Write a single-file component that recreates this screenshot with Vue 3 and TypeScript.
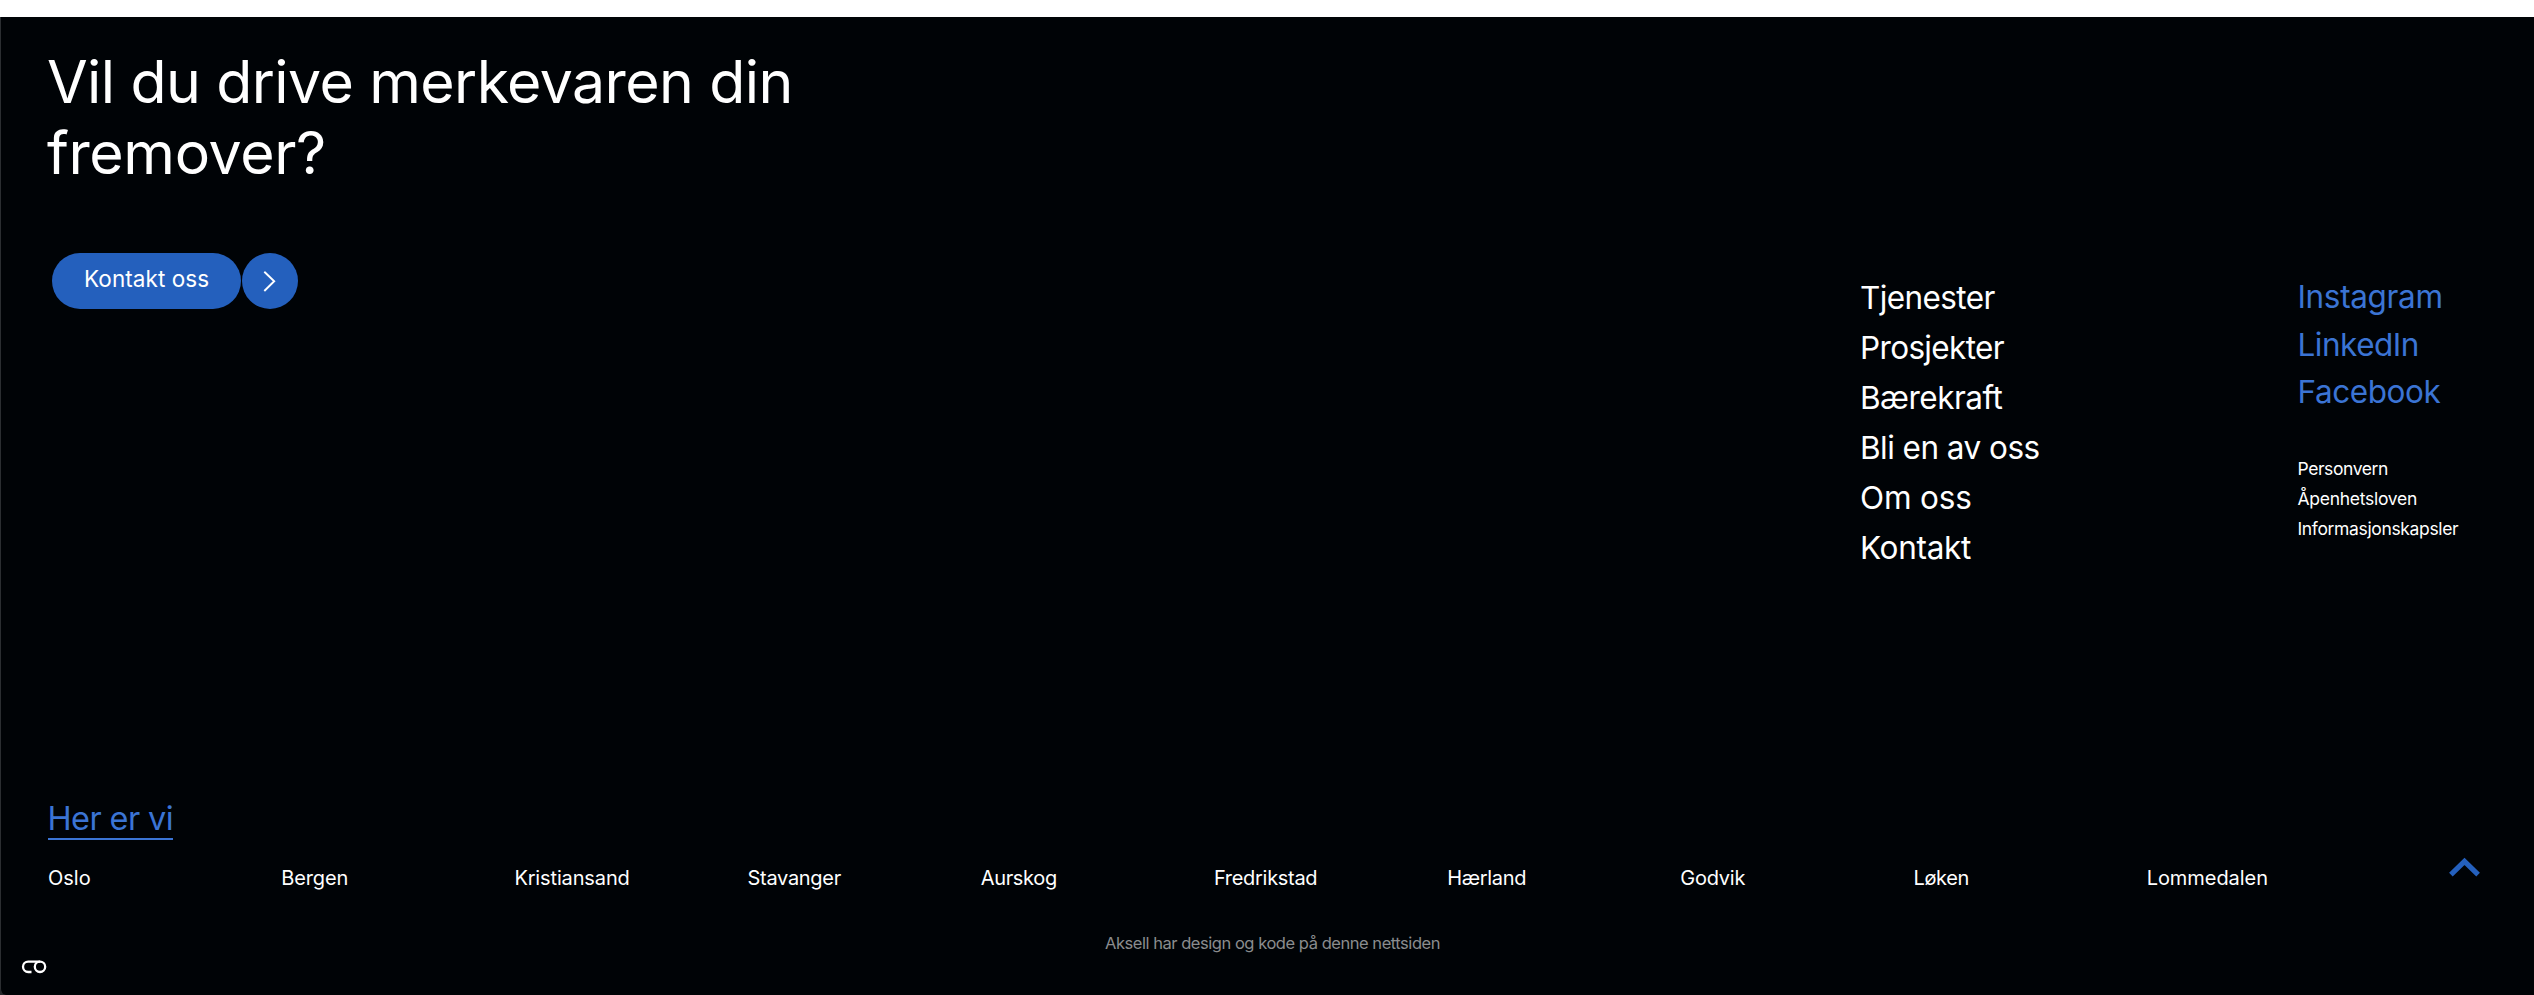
<script setup lang="ts">
interface Item {
  label: string
  tracking: number
}

const nav: Item[] = [
  { label: 'Tjenester', tracking: -0.6 },
  { label: 'Prosjekter', tracking: -0.65 },
  { label: 'Bærekraft', tracking: -0.52 },
  { label: 'Bli en av oss', tracking: -0.53 },
  { label: 'Om oss', tracking: -0.15 },
  { label: 'Kontakt', tracking: -0.31 },
]

const social: Item[] = [
  { label: 'Instagram', tracking: -0.35 },
  { label: 'LinkedIn', tracking: -0.5 },
  { label: 'Facebook', tracking: -0.42 },
]

const legal: Item[] = [
  { label: 'Personvern', tracking: -0.42 },
  { label: 'Åpenhetsloven', tracking: -0.27 },
  { label: 'Informasjonskapsler', tracking: -0.35 },
]

const cities: Item[] = [
  { label: 'Oslo', tracking: 0 },
  { label: 'Bergen', tracking: -0.1 },
  { label: 'Kristiansand', tracking: -0.14 },
  { label: 'Stavanger', tracking: -0.3 },
  { label: 'Aurskog', tracking: -0.35 },
  { label: 'Fredrikstad', tracking: -0.3 },
  { label: 'Hærland', tracking: -0.3 },
  { label: 'Godvik', tracking: -0.25 },
  { label: 'Løken', tracking: -0.35 },
  { label: 'Lommedalen', tracking: -0.06 },
]

const tracked = (item: Item) => ({ letterSpacing: `${item.tracking}px` })
</script>

<template>
  <div class="strip"></div>
  <footer class="footer">
    <div class="top">
      <section class="lead">
        <h2 class="title">
          <span class="line first">Vil du drive merkevaren din</span>
          <span class="line second">fremover?</span>
        </h2>
        <a class="cta">
          <span class="pill">Kontakt oss</span>
          <span class="circle">
            <svg width="56" height="56" viewBox="0 0 56 56" fill="none">
              <path d="M22.3 18.7 L32.2 28.3 L22.3 38" stroke="#fff" stroke-width="1.9" />
            </svg>
          </span>
        </a>
      </section>
      <nav class="nav">
        <a v-for="item in nav" :key="item.label" :style="tracked(item)">{{ item.label }}</a>
      </nav>
      <div class="side">
        <div class="social">
          <a v-for="item in social" :key="item.label" :style="tracked(item)">{{ item.label }}</a>
        </div>
        <div class="legal">
          <a v-for="item in legal" :key="item.label" :style="tracked(item)">{{ item.label }}</a>
        </div>
      </div>
    </div>
    <a class="here">Her er vi</a>
    <div class="cities">
      <a v-for="item in cities" :key="item.label" :style="tracked(item)">{{ item.label }}</a>
    </div>
    <p class="credit">Aksell har design og kode på denne nettsiden</p>

    <svg class="to-top" width="35" height="24" viewBox="0 0 35 24" fill="none">
      <path d="M3.9 19.6 L17.5 6.4 L31.1 19.6" stroke="#2460bd" stroke-width="5.2" />
    </svg>
    <svg class="badge" width="28" height="16" viewBox="0 0 28 16" fill="none">
      <path d="M11.5 13 H8.2 A5.2 5.2 0 0 1 8.2 2.6 H20" stroke="#fff" stroke-width="2.3" />
      <circle cx="20" cy="7.8" r="5.2" stroke="#fff" stroke-width="2.3" />
    </svg>
  </footer>
</template>

<style>
body {
  margin: 0;
  background: #25282b;
}
</style>

<style scoped>
.strip {
  height: 17px;
  background: #fff;
}
.footer {
  position: relative;
  box-sizing: border-box;
  height: 978px;
  padding: 29px 0 0 47px;
  border-left: 1px solid #2b2e31;
  border-bottom-left-radius: 6px;
  background: #000306;
  color: #fff;
  font-family: Inter, "Liberation Sans", sans-serif;
  overflow: hidden;
}
.top {
  display: flex;
  height: 754px;
}
.lead {
  width: 1812px;
}
.title {
  margin: 0 0 0 -1px;
  font-size: 59px;
  line-height: 71px;
  font-weight: 400;
}
.line {
  display: block;
  white-space: nowrap;
}
.first {
  letter-spacing: -0.6px;
}
.second {
  letter-spacing: -0.37px;
}
.cta {
  display: flex;
  gap: 0.5px;
  margin: 65px 0 0 4px;
}
.pill {
  box-sizing: border-box;
  width: 189px;
  height: 56px;
  padding-left: 32px;
  border-radius: 28px;
  background: #2460bd;
  font-size: 22.5px;
  line-height: 52px;
  letter-spacing: 0.08px;
}
.circle {
  width: 56px;
  height: 56px;
  border-radius: 50%;
  background: #2460bd;
}
.circle svg {
  display: block;
}
.nav {
  display: flex;
  flex-direction: column;
  width: 437.5px;
  padding-top: 227px;
  font-size: 31.5px;
  line-height: 50px;
}
.side {
  padding-top: 227px;
}
.social {
  display: flex;
  flex-direction: column;
  color: #3b74d4;
  font-size: 31.5px;
  line-height: 47.5px;
}
.legal {
  display: flex;
  flex-direction: column;
  margin-top: 38.5px;
  font-size: 17.5px;
  line-height: 30px;
}
.here {
  display: block;
  width: 125px;
  border-bottom: 2px solid #3b74d4;
  color: #3b74d4;
  font-size: 32.5px;
  line-height: 38px;
  letter-spacing: -0.6px;
  white-space: nowrap;
  text-indent: -0.5px;
}
.cities {
  display: grid;
  grid-template-columns: repeat(10, 233.2px);
  margin-top: 23px;
  font-size: 20px;
  line-height: 30px;
}
.credit {
  margin: 38px 0 0 -48px;
  padding-left: 11px;
  color: #8a8c8e;
  font-size: 16.5px;
  line-height: 24px;
  letter-spacing: -0.46px;
  text-align: center;
}
.to-top {
  position: absolute;
  left: 2446px;
  top: 838px;
}
.badge {
  position: absolute;
  left: 19px;
  top: 942px;
}
</style>
